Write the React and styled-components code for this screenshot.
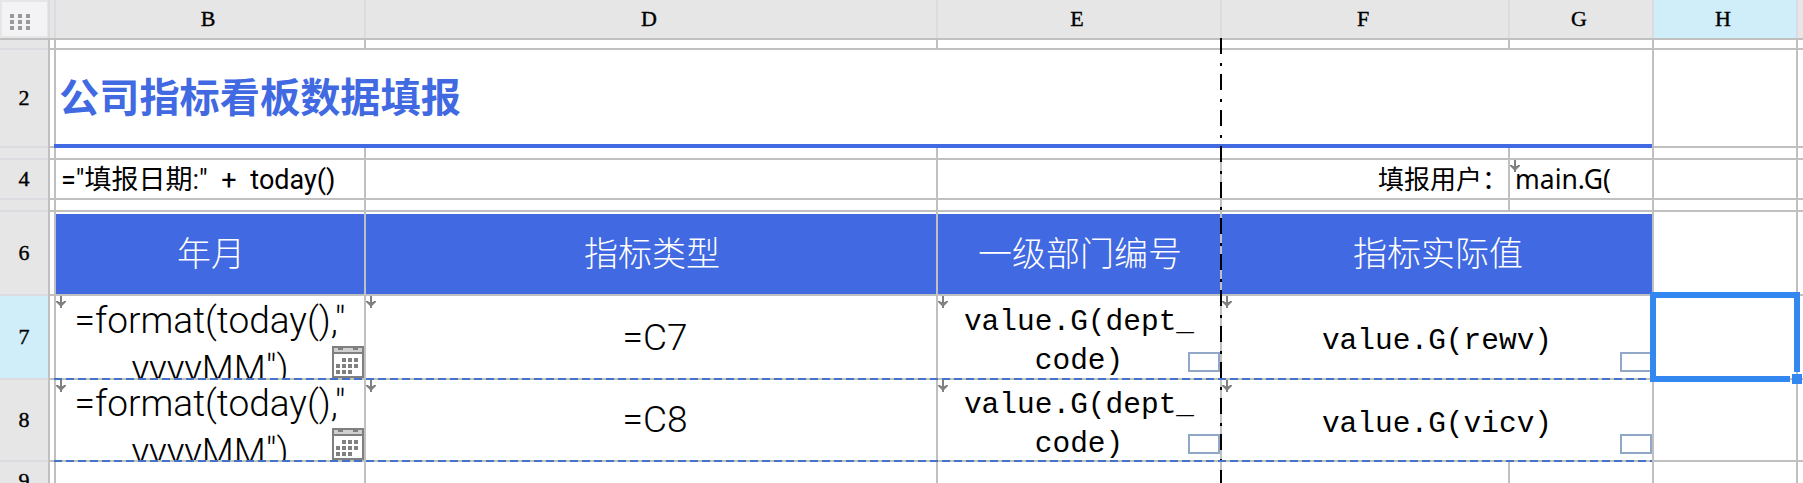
import React from "react";
import styled, { createGlobalStyle } from "styled-components";

const Global = createGlobalStyle`
  html, body { margin: 0; padding: 0; background: #fff; overflow: hidden; }
`;

const sansStack = `"Noto Sans", "Noto Sans CJK SC", sans-serif`;
const narrowStack = `Roboto, "Noto Sans CJK SC", sans-serif`;
const cjkStack = `"Noto Sans CJK SC", "Noto Sans", sans-serif`;
const labelStack = `"Liberation Serif", serif`;
const monoStack = `"Liberation Mono", monospace`;
const blue = "#4169e1";
const line = "#c0c0c0";
const lightLine = "#dcdce0";
const activeHead = "#cfeefa";

const Sheet = styled.div`
  position: relative;
  width: 1803px;
  height: 483px;
  overflow: hidden;
  display: grid;
  grid-template-columns: 48px 4px 308px 570px 282px 286px 142px 142px 5px;
  grid-template-rows: 38px 8px 96px 10px 38px 10px 82px 82px 80px 38px;
  gap: 2px;
  background: ${line};
`;

const Corner = styled.div`
  background: #e6e6e6;
  box-shadow: 2px 0 0 ${lightLine};
  padding: 2px 1px 2px 2px;
  display: flex;
`;

const CornerFace = styled.div`
  flex: 1;
  background: #f3f3f6;
  padding: 12px 0 0 8px;
`;

const ColHead = styled.div`
  background: ${(p) => (p.$active ? activeHead : "#e6e6e6")};
  box-shadow: 2px 0 0 ${lightLine};
  display: flex;
  align-items: center;
  justify-content: center;
  padding-right: 4px;
  font: 400 22px ${labelStack};
  -webkit-text-stroke: 0.4px #000;
  color: #000;
`;

const RowHead = styled.div`
  background: ${(p) => (p.$active ? activeHead : "#e6e6e6")};
  box-shadow: 0 2px 0 ${lightLine};
  display: flex;
  align-items: center;
  justify-content: center;
  font: 400 22px ${labelStack};
  -webkit-text-stroke: 0.4px #000;
  color: #000;
`;

const Cell = styled.div`
  position: relative;
  background: #fff;
  grid-column: span ${(p) => p.$span || 1};
  min-width: 0;
`;

const TitleCell = styled(Cell)`
  display: flex;
  align-items: center;
  padding: 0 0 6px 3px;
  font: 700 40.2px/1 ${cjkStack};
  color: ${blue};
  &::after {
    content: "";
    position: absolute;
    left: -2px;
    right: 0;
    bottom: -2px;
    height: 4px;
    background: ${blue};
  }
`;

const TextCell = styled(Cell)`
  display: flex;
  align-items: center;
  justify-content: ${(p) => (p.$right ? "flex-end" : "flex-start")};
  padding-left: ${(p) => (p.$right ? 0 : "5px")};
  font: 400 26.5px/1 ${sansStack};
  color: #000;
  white-space: pre;
  overflow: hidden;
`;

const DateCell = styled(TextCell)`
  padding-top: 2px;
  font: 400 27px/1 ${narrowStack};
  word-spacing: 7px;
`;

const UserLabelCell = styled(TextCell)`
  font-size: 26px;
`;

const HeaderCell = styled(Cell)`
  background: ${blue};
  border-top: 2px solid #fff;
  display: flex;
  align-items: center;
  justify-content: center;
  padding: 0 0 4px 2px;
  font: 300 34px/1 ${cjkStack};
  color: #fff;
`;

const FormulaCell = styled(Cell)`
  overflow: hidden;
  text-align: center;
  font: 300 37px/48px ${narrowStack};
  color: #000;
  padding-top: ${(p) => (p.$shift ? "0" : "1px")};
`;

const RefCell = styled(Cell)`
  display: flex;
  align-items: center;
  justify-content: center;
  padding-left: 8px;
  padding-bottom: ${(p) => (p.$shift ? "2px" : "0")};
  font: 300 37px/1 ${narrowStack};
  color: #000;
`;

const ValueCell = styled(Cell)`
  display: flex;
  align-items: center;
  justify-content: center;
  text-align: center;
  padding-top: 9px;
  font: 400 29.5px/39px ${monoStack};
  color: #000;
`;

const MarkerSvg = styled.svg`
  position: absolute;
  left: 0;
  top: 0;
  width: 10px;
  height: 12px;
  fill: #808080;
`;

const Marker = () => (
  <MarkerSvg viewBox="0 0 10 12">
    <path d="M4 0h2v6h1l1-1h2v1l-4 4v2H4v-2L0 6V5h2l1 1h1z" />
  </MarkerSvg>
);

const CalendarSvg = styled.svg`
  position: absolute;
  right: 0;
  bottom: 0;
  width: 32px;
  height: 32px;
  background: #fff;
`;

const Calendar = () => {
  const dots = [
    [10, 12], [16, 12], [22, 12],
    [4, 18], [10, 18], [16, 18], [22, 18],
    [4, 24], [10, 24], [16, 24],
  ];
  return (
    <CalendarSvg viewBox="0 0 32 32">
      <path fill="#d0d0d0" d="M2 2h28v4H2z" />
      <path fill="none" stroke="#808080" strokeWidth="2" d="M1 1h30v30H1z" />
      <path fill="#808080" d="M2 6h28v2H2zM6 2h5v2H6zM21 2h5v2h-5z" />
      {dots.map(([x, y]) => (
        <rect key={`${x}-${y}`} x={x} y={y} width="4" height="4" fill="#808080" />
      ))}
    </CalendarSvg>
  );
};

const WidgetBox = styled.span`
  position: absolute;
  right: 0;
  bottom: 6px;
  width: 32px;
  height: 20px;
  box-sizing: border-box;
  border: 2px solid #92a8c8;
  background: #fff;
`;

const FreezeLine = styled.div`
  position: absolute;
  left: 1220px;
  top: 38px;
  bottom: 0;
  width: 2px;
  background: repeating-linear-gradient(
    to bottom,
    #000 0 16px,
    transparent 16px 25px,
    #000 25px 28px,
    transparent 28px 36px
  );
`;

const DashLine = styled.div`
  position: absolute;
  left: 54px;
  width: 1598px;
  top: ${(p) => p.$y}px;
  height: 2px;
  background: repeating-linear-gradient(to right, #4472c4 0 8px, ${line} 8px 12px);
`;

const Selection = styled.div`
  position: absolute;
  left: 1650px;
  top: 292px;
  width: 150px;
  height: 90px;
  box-sizing: border-box;
  border-top: 6px solid #3287f0;
  border-left: 6px solid #3287f0;
  &::before {
    content: "";
    position: absolute;
    right: 0;
    top: 0;
    width: 6px;
    height: 74px;
    background: #3287f0;
  }
  &::after {
    content: "";
    position: absolute;
    left: 0;
    bottom: 0;
    width: 134px;
    height: 6px;
    background: #3287f0;
  }
`;

const Handle = styled.span`
  position: absolute;
  right: -2px;
  bottom: -2px;
  width: 10px;
  height: 10px;
  background: #3287f0;
`;

const GripSvg = styled.svg`
  display: block;
  width: 20px;
  height: 16px;
  fill: #999;
`;

const Grip = () => (
  <GripSvg viewBox="0 0 20 16">
    {[0, 6, 12].flatMap((y) =>
      [0, 8, 16].map((x) => <rect key={`${x}-${y}`} x={x} y={y} width="4" height="4" />)
    )}
  </GripSvg>
);

const Blanks = ({ n }) => Array.from({ length: n }, (_, i) => <Cell key={i} />);

const DataRow = ({ num, active, shift }) => (
  <>
    <RowHead $active={active}>{num}</RowHead>
    <Cell />
    <FormulaCell $shift={shift}>
      <Marker />
      =format(today(),"
      <br />
      yyyyMM")
      <Calendar />
    </FormulaCell>
    <RefCell $shift={shift}>
      <Marker />
      =C{num}
    </RefCell>
    <ValueCell>
      <Marker />
      <span>
        value.G(dept_
        <br />
        code)
      </span>
      <WidgetBox />
    </ValueCell>
    <ValueCell $span={2}>
      <Marker />
      value.G({num === 7 ? "rewv" : "vicv"})
      <WidgetBox />
    </ValueCell>
    <Cell />
    <Cell />
  </>
);

export default function App() {
  return (
    <>
      <Global />
      <Sheet>
        <Corner>
          <CornerFace>
            <Grip />
          </CornerFace>
        </Corner>
        <ColHead />
        <ColHead>B</ColHead>
        <ColHead>D</ColHead>
        <ColHead>E</ColHead>
        <ColHead>F</ColHead>
        <ColHead>G</ColHead>
        <ColHead $active>H</ColHead>
        <ColHead />

        <RowHead />
        <Blanks n={8} />

        <RowHead>2</RowHead>
        <Cell />
        <TitleCell $span={5}>公司指标看板数据填报</TitleCell>
        <Cell />
        <Cell />

        <RowHead />
        <Blanks n={8} />

        <RowHead>4</RowHead>
        <Cell />
        <DateCell>="填报日期:" + today()</DateCell>
        <Cell />
        <Cell />
        <UserLabelCell $right>填报用户：</UserLabelCell>
        <TextCell>
          <Marker />
          main.G(
        </TextCell>
        <Cell />
        <Cell />

        <RowHead />
        <Blanks n={8} />

        <RowHead>6</RowHead>
        <Cell />
        <HeaderCell>年月</HeaderCell>
        <HeaderCell>指标类型</HeaderCell>
        <HeaderCell>一级部门编号</HeaderCell>
        <HeaderCell $span={2}>指标实际值</HeaderCell>
        <Cell />
        <Cell />

        <DataRow num={7} active />
        <DataRow num={8} shift />

        <RowHead>9</RowHead>
        <Blanks n={8} />

        <FreezeLine />
        <DashLine $y={378} />
        <DashLine $y={460} />
        <Selection>
          <Handle />
        </Selection>
      </Sheet>
    </>
  );
}
